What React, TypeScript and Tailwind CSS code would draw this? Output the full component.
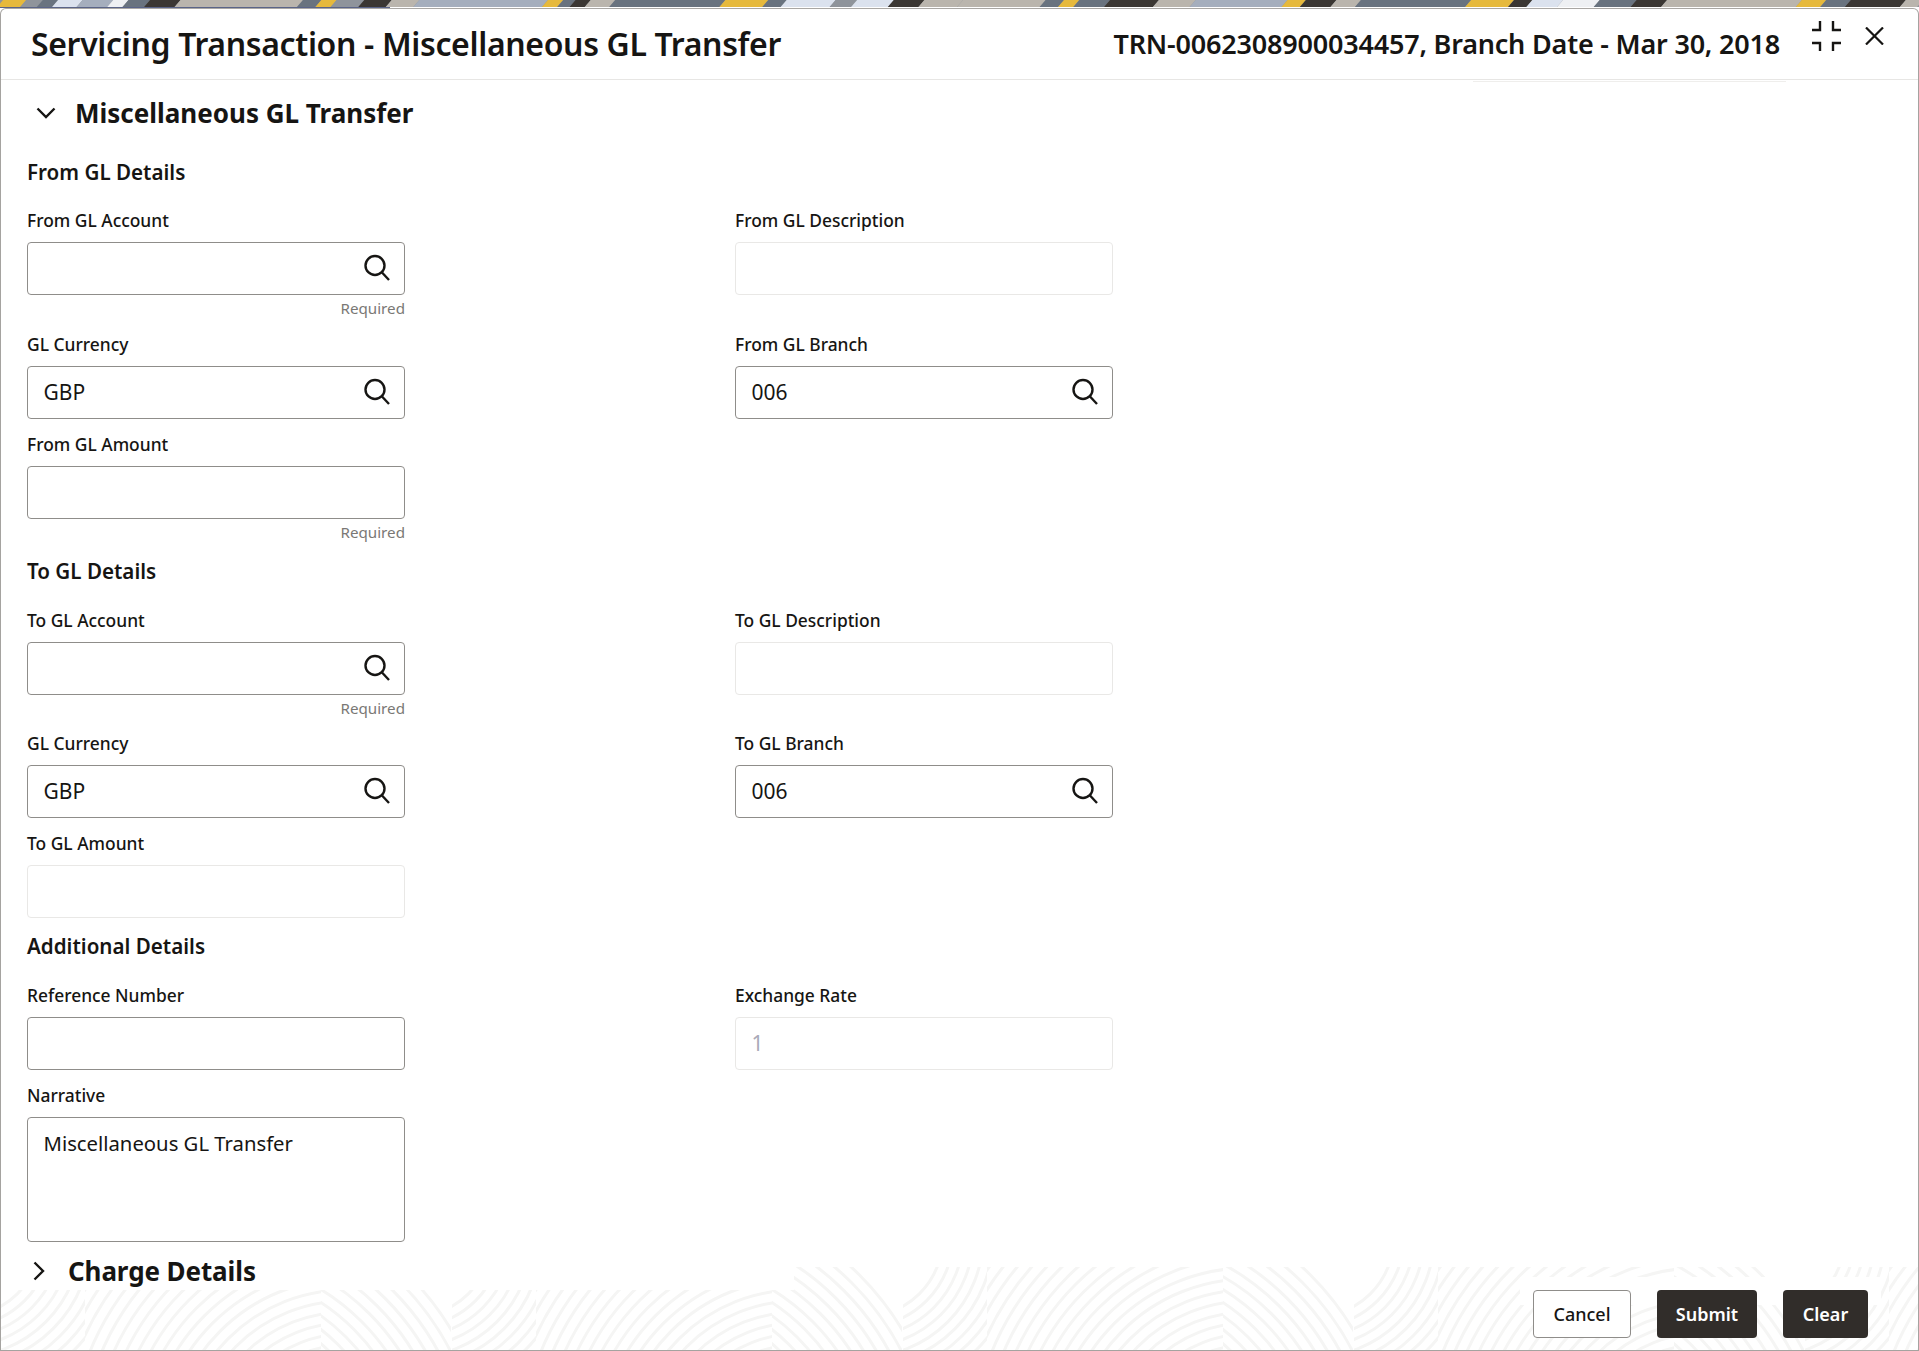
import React from "react";

const font = { fontFamily: '"Noto Sans", "Open Sans", sans-serif' };

function SearchIcon() {
  return (
    <svg width="28" height="28" viewBox="0 0 28 28" fill="none" stroke="#161513" strokeWidth="2.4" className="absolute right-[13px] top-[11px]">
      <circle cx="12" cy="11.5" r="9.5" />
      <path d="M19 18.5 L26 26" />
    </svg>
  );
}

function Field({ label, value, search, required, disabled, muted, className = "" }: { label: string; value?: string; search?: boolean; required?: boolean; disabled?: boolean; muted?: boolean; className?: string }) {
  return (
    <div className={`w-[378px] ${className}`}>
      <div className="h-[25px] text-[17.4px] leading-[25px] font-medium text-[#161513] mb-[9px]">{label}</div>
      <div className={`relative h-[53px] rounded-[4px] border flex items-center px-[15.5px] text-[21px] bg-white ${disabled ? "border-[#e9e8e6]" : "border-[#8f8d8a]"} ${muted ? "text-[#a9aab8]" : "text-[#161513]"}`}>
        {value}
        {search && <SearchIcon />}
      </div>
      {required && <div className="h-[15px] mt-[6px] text-right text-[15.2px] leading-[15px] text-[#7a7875]">Required</div>}
    </div>
  );
}

function Row({ children, className = "" }: { children: React.ReactNode; className?: string }) {
  return <div className={`flex gap-[330px] ${className}`}>{children}</div>;
}

function Heading({ children, className = "" }: { children: React.ReactNode; className?: string }) {
  return <h3 className={`h-[28px] text-[20.6px] leading-[28px] font-semibold text-[#161513] ${className}`}>{children}</h3>;
}

function Waves() {
  const a: React.ReactNode[] = [];
  for (let r = 40; r < 130; r += 10) a.push(<circle key={`a${r}`} cx="-40" cy="-30" r={r + 40} />);
  const b: React.ReactNode[] = [];
  for (let r = 90; r < 340; r += 11) b.push(<circle key={`b${r}`} cx="345" cy="190" r={r} />);
  const c: React.ReactNode[] = [];
  for (let r = 110; r < 290; r += 11) c.push(<circle key={`c${r}`} cx="205" cy="210" r={r} />);
  return (
    <svg className="absolute inset-0 w-full h-full">
      <defs>
        <clipPath id="wa"><rect x="0" y="0" width="84" height="120" /></clipPath>
        <clipPath id="wb"><rect x="84" y="0" width="236" height="120" /></clipPath>
        <clipPath id="wc"><rect x="320" y="0" width="130" height="120" /></clipPath>
        <pattern id="wave" x="0" y="0" width="451" height="120" patternUnits="userSpaceOnUse">
          <g fill="none" stroke="#f5f5f4" strokeWidth="3">
            <g clipPath="url(#wa)">{a}</g>
            <g clipPath="url(#wb)">{b}</g>
            <g clipPath="url(#wc)">{c}</g>
          </g>
        </pattern>
      </defs>
      <rect x="0" y="23" width="793" height="61" fill="url(#wave)" />
      <rect x="793" y="0" width="1126" height="84" fill="url(#wave)" />
    </svg>
  );
}

const TAN = "#bab5ad", SLATE = "#69737f", BLUE = "#a5aebd", LIGHT = "#dbe2ee", DARK = "#3b3733", YEL = "#e6b93c", WHITE = "#eef0f3", GRAY = "#8f949b";
const bandA: [number, string][] = [[38, YEL], [65, GRAY], [90, SLATE], [130, LIGHT], [180, BLUE], [205, WHITE], [240, SLATE], [290, DARK], [490, TAN], [520, SLATE], [545, YEL], [590, GRAY], [635, DARK], [680, TAN], [890, BLUE], [915, YEL], [935, SLATE], [960, DARK], [1000, TAN], [1180, SLATE], [1250, YEL], [1280, SLATE], [1360, LIGHT], [1395, GRAY], [1455, LIGHT], [1505, DARK], [1568, TAN]];
const bandB: [number, string][] = [[135, TAN], [165, SLATE], [190, YEL], [240, SLATE], [320, DARK], [380, TAN], [530, BLUE], [560, YEL], [610, DARK], [650, TAN], [830, SLATE], [900, YEL], [930, DARK], [980, LIGHT], [1040, WHITE], [1100, SLATE], [1150, DARK], [1370, TAN], [1410, YEL], [1450, SLATE], [1540, DARK], [1568, TAN]];

function TopBand() {
  const k = 960 / 1568;
  const items: React.ReactNode[] = [];
  const add = (band: [number, string][], off: number, pre: string) => {
    let prev = 0;
    band.forEach(([end, color], i) => {
      const x0 = off + prev * k;
      const x1 = off + end * k;
      items.push(<polygon key={pre + i} points={`${x0 - 3},7 ${x0 + 3},0 ${x1 + 3},0 ${x1 - 3},7`} fill={color} />);
      prev = end;
    });
  };
  add(bandA, 0, "a");
  add(bandB, 960, "b");
  return (
    <svg className="block w-full h-[7px]" viewBox="0 0 1919 7" preserveAspectRatio="none">
      <rect width="1919" height="7" fill={GRAY} />
      {items}
    </svg>
  );
}

export default function App() {
  return (
    <div className="w-[1919px] h-[1351px] overflow-hidden bg-white flex flex-col" style={font}>
      <TopBand />
      <div className="h-[1px] flex shrink-0">
        <div className="w-[390px] bg-[#5a6488]" />
        <div className="flex-1 bg-white" />
      </div>
      <div className="relative flex-1 flex flex-col rounded-t-[6px] border border-t-[#a9a7a4] border-[#a5a3a0] bg-white overflow-hidden">
        <header className="h-[71px] shrink-0 border-b border-[#e7e6e4] flex items-center pl-[30px] pr-[34px]">
          <h1 className="text-[32px] font-semibold text-[#161513] tracking-[-0.35px] flex-1">Servicing Transaction - Miscellaneous GL Transfer</h1>
          <div className="text-[27px] font-semibold text-[#161513] tracking-[-0.2px] mr-[32px]">TRN-0062308900034457, Branch Date - Mar 30, 2018</div>
          <div className="flex items-start gap-[24px] -mt-[16px]">
            <svg width="29" height="30" viewBox="0 0 29 30" fill="none" stroke="#161513" strokeWidth="2.4">
              <path d="M8 0V9H0M21 0V9H29M8 30V22H0M21 30V22H29" />
            </svg>
            <svg width="19" height="18" viewBox="0 0 19 18" fill="none" stroke="#161513" strokeWidth="2.2" className="mt-[6px]">
              <path d="M1 0.5L18 17.5M18 0.5L1 17.5" />
            </svg>
          </div>
        </header>
        <div className="absolute left-[1472px] top-[72px] w-[313px] h-[1px] bg-[#efeeec]" />
        <main className="flex-1 pl-[26px]">
          <div className="flex items-center gap-[19px] h-[28px] mt-[19px] pl-[9px]">
            <svg width="20" height="12" viewBox="0 0 20 12" fill="none" stroke="#161513" strokeWidth="2.4"><path d="M1.5 1.5L10 10L18.5 1.5" /></svg>
            <h2 className="text-[26px] leading-[28px] font-bold text-[#161513]">Miscellaneous GL Transfer</h2>
          </div>
          <Heading className="mt-[31px]">From GL Details</Heading>
          <Row className="mt-[22px]">
            <Field label="From GL Account" search required />
            <Field label="From GL Description" disabled />
          </Row>
          <Row className="mt-[16px]">
            <Field label="GL Currency" value="GBP" search />
            <Field label="From GL Branch" value="006" search />
          </Row>
          <Field label="From GL Amount" required className="mt-[13px]" />
          <Heading className="mt-[17px]">To GL Details</Heading>
          <Row className="mt-[23px]">
            <Field label="To GL Account" search required />
            <Field label="To GL Description" disabled />
          </Row>
          <Row className="mt-[15px]">
            <Field label="GL Currency" value="GBP" search />
            <Field label="To GL Branch" value="006" search />
          </Row>
          <Field label="To GL Amount" disabled className="mt-[13px]" />
          <Heading className="mt-[14px]">Additional Details</Heading>
          <Row className="mt-[23px]">
            <Field label="Reference Number" />
            <Field label="Exchange Rate" value="1" disabled muted />
          </Row>
          <div className="w-[378px] mt-[13px]">
            <div className="h-[25px] text-[17.4px] leading-[25px] font-medium text-[#161513] mb-[9px]">Narrative</div>
            <div className="h-[125px] rounded-[4px] border border-[#8f8d8a] px-[15.5px] pt-[11px] text-[20.3px] leading-[28px] text-[#161513]">Miscellaneous GL Transfer</div>
          </div>
        </main>
        <div className="relative h-[93px] shrink-0">
          <div className="absolute inset-x-0 top-[10px] bottom-0 overflow-hidden"><Waves /></div>
          <div className="absolute left-[1519px] top-[20px] w-[361px] h-[28px] bg-white" />
          <div className="absolute left-[32px] top-0 flex items-center gap-[23px] h-[28px]">
            <svg width="12" height="20" viewBox="0 0 12 20" fill="none" stroke="#161513" strokeWidth="2.4"><path d="M1.5 1.5L10 10L1.5 18.5" /></svg>
            <h2 className="text-[26px] leading-[28px] font-bold text-[#161513] tracking-[-0.1px]">Charge Details</h2>
          </div>
          <div className="absolute right-[50px] top-[33px] flex gap-[26px]">
            <button className="w-[98px] h-[48px] rounded-[4px] border border-[#8f8d8a] bg-white text-[18px] font-medium text-[#161513]">Cancel</button>
            <button className="w-[100px] h-[48px] rounded-[4px] bg-[#312d2a] text-[18px] font-semibold text-white">Submit</button>
            <button className="w-[85px] h-[48px] rounded-[4px] bg-[#312d2a] text-[18px] font-semibold text-white">Clear</button>
          </div>
        </div>
      </div>
    </div>
  );
}
